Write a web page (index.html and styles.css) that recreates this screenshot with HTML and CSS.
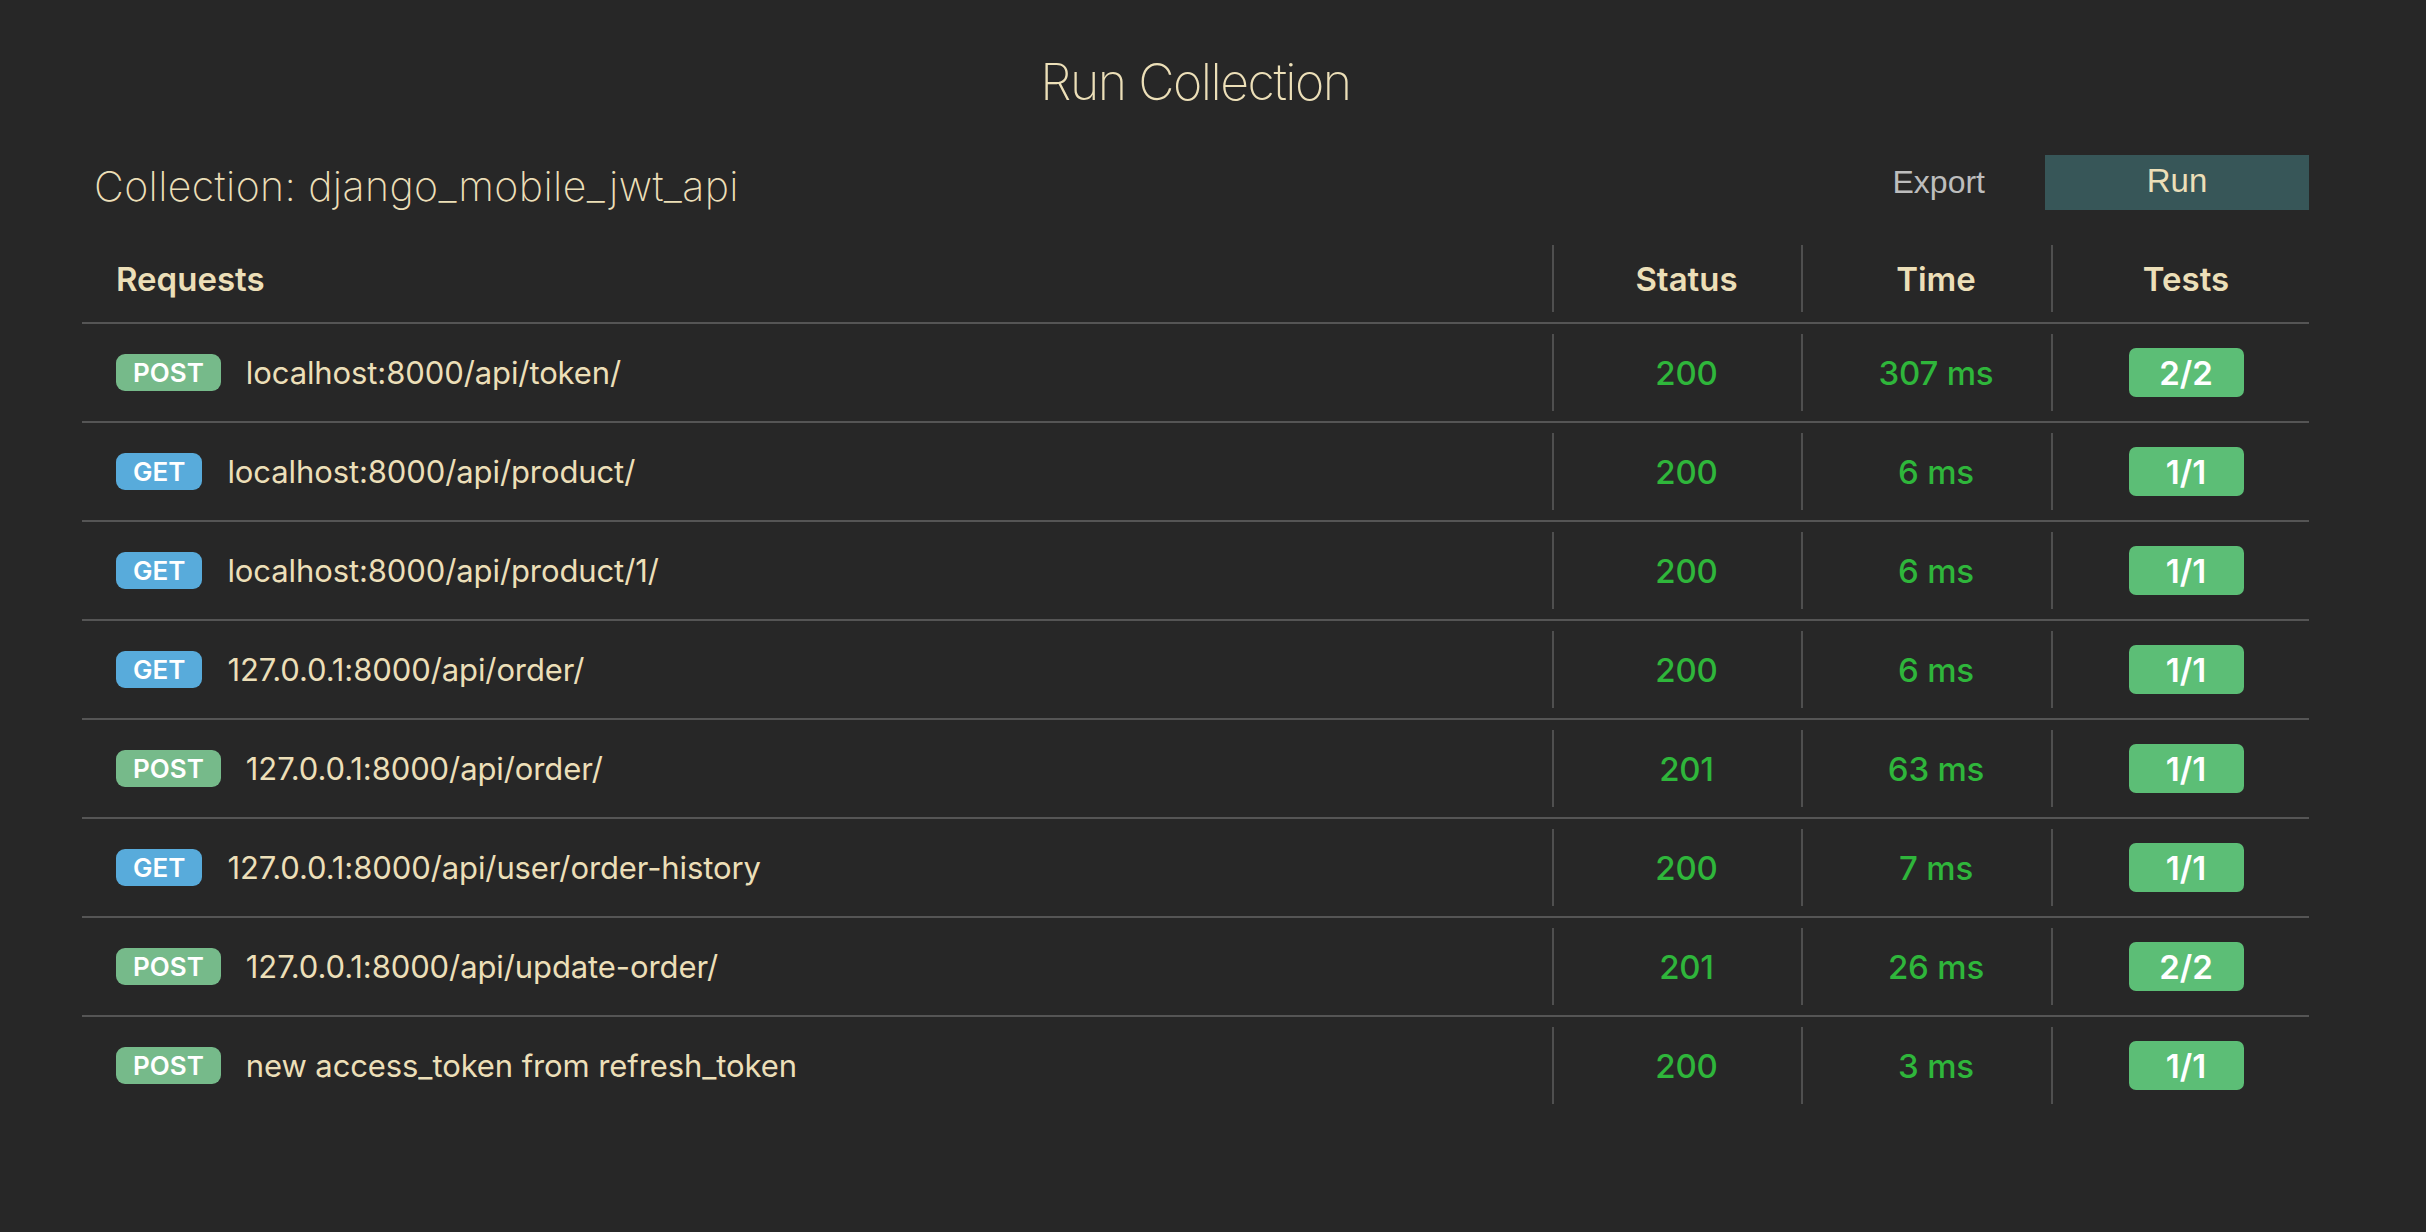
FILE: index.html
```html
<!DOCTYPE html>
<html lang="en">
<head>
<meta charset="utf-8">
<title>Run Collection</title>
<link rel="stylesheet" href="styles.css">
</head>
<body>
<div class="page">
  <h1 class="title">Run Collection</h1>
  <div class="toolbar">
    <div class="coll-name">Collection: django_mobile_jwt_api</div>
    <div class="actions">
      <button class="btn-export">Export</button>
      <button class="btn-run">Run</button>
    </div>
  </div>
  <div class="table">
    <div class="row head">
      <div class="cell req">Requests</div>
      <div class="cell num">Status</div>
      <div class="cell num">Time</div>
      <div class="cell num last">Tests</div>
    </div>
    <div class="row">
      <div class="cell req"><span class="method post">POST</span><span class="url">localhost:8000/api/token/</span></div>
      <div class="cell num ok">200</div>
      <div class="cell num ok">307 ms</div>
      <div class="cell num last"><span class="tests">2/2</span></div>
    </div>
    <div class="row">
      <div class="cell req"><span class="method get">GET</span><span class="url">localhost:8000/api/product/</span></div>
      <div class="cell num ok">200</div>
      <div class="cell num ok">6 ms</div>
      <div class="cell num last"><span class="tests">1/1</span></div>
    </div>
    <div class="row">
      <div class="cell req"><span class="method get">GET</span><span class="url">localhost:8000/api/product/1/</span></div>
      <div class="cell num ok">200</div>
      <div class="cell num ok">6 ms</div>
      <div class="cell num last"><span class="tests">1/1</span></div>
    </div>
    <div class="row">
      <div class="cell req"><span class="method get">GET</span><span class="url">127.0.0.1:8000/api/order/</span></div>
      <div class="cell num ok">200</div>
      <div class="cell num ok">6 ms</div>
      <div class="cell num last"><span class="tests">1/1</span></div>
    </div>
    <div class="row">
      <div class="cell req"><span class="method post">POST</span><span class="url">127.0.0.1:8000/api/order/</span></div>
      <div class="cell num ok">201</div>
      <div class="cell num ok">63 ms</div>
      <div class="cell num last"><span class="tests">1/1</span></div>
    </div>
    <div class="row">
      <div class="cell req"><span class="method get">GET</span><span class="url">127.0.0.1:8000/api/user/order-history</span></div>
      <div class="cell num ok">200</div>
      <div class="cell num ok">7 ms</div>
      <div class="cell num last"><span class="tests">1/1</span></div>
    </div>
    <div class="row">
      <div class="cell req"><span class="method post">POST</span><span class="url">127.0.0.1:8000/api/update-order/</span></div>
      <div class="cell num ok">201</div>
      <div class="cell num ok">26 ms</div>
      <div class="cell num last"><span class="tests">2/2</span></div>
    </div>
    <div class="row">
      <div class="cell req"><span class="method post">POST</span><span class="url">new access_token from refresh_token</span></div>
      <div class="cell num ok">200</div>
      <div class="cell num ok">3 ms</div>
      <div class="cell num last"><span class="tests">1/1</span></div>
    </div>
  </div>
</div>
</body>
</html>
```

FILE: styles.css
```css
* { box-sizing: border-box; }
html, body {
  margin: 0;
  padding: 0;
  background: #272727;
}
body {
  font-family: Inter, "Noto Sans", sans-serif;
  color: #ecdfb8;
  min-height: 1232px;
}
.page {
  padding: 0 117px 0 82px;
}
.title {
  margin: 0;
  padding-top: 52px;
  text-align: center;
  font-size: 50px;
  line-height: 60px;
  font-weight: 200;
  letter-spacing: -1.5px;
  color: #ecdfb8;
}
.toolbar {
  display: flex;
  align-items: center;
  justify-content: space-between;
  margin-top: 43px;
  height: 55px;
}
.coll-name {
  padding-left: 12px;
  padding-top: 6px;
  font-size: 41px;
  font-weight: 200;
  letter-spacing: 0.4px;
  color: #ecdfb8;
}
.actions {
  display: flex;
  align-items: center;
  height: 55px;
}
.btn-export {
  font-family: "Liberation Sans", Arial, sans-serif;
  font-size: 32px;
  color: #bdbdbd;
  background: none;
  border: none;
  padding: 0 60px 0 0;
}
.btn-run {
  font-family: "Liberation Sans", Arial, sans-serif;
  font-size: 33px;
  color: #ecdfb8;
  background: #375658;
  border: none;
  width: 264px;
  height: 55px;
  padding: 0 0 4px;
}
.table {
  margin-top: 25px;
}
.row {
  display: grid;
  grid-template-columns: 1fr 249px 250px 258px;
  padding: 10px 0;
  border-top: 2px solid #555;
}
.row.head {
  border-top: none;
}
.cell {
  display: flex;
  align-items: center;
  height: 77px;
  font-size: 31px;
}
.head .cell {
  height: 67px;
  font-size: 33px;
  font-weight: 600;
  letter-spacing: 0;
}
.cell.req {
  padding-left: 34px;
}
.cell.num {
  justify-content: center;
  border-left: 2px solid #4f4f4f;
  padding-left: 18px;
}
.cell.num.last {
  padding-left: 10px;
}
.cell.ok {
  color: #2fb63b;
  font-weight: 500;
  font-size: 33px;
  letter-spacing: -0.2px;
}
.method {
  display: inline-flex;
  align-items: center;
  justify-content: center;
  height: 37px;
  padding: 0 17px;
  border-radius: 9px;
  color: #ffffff;
  font-size: 26px;
  font-weight: 600;
  letter-spacing: 0;
  margin-right: 25px;
}
.method.post { background: #76ba8a; }
.method.get { background: #58abdb; }
.url {
  color: #ecdfb8;
  letter-spacing: -0.1px;
}
.tests {
  display: inline-flex;
  align-items: center;
  justify-content: center;
  width: 115px;
  height: 49px;
  border-radius: 7px;
  background: #5cbe76;
  color: #ffffff;
  font-size: 33px;
  font-weight: 600;
}
```
